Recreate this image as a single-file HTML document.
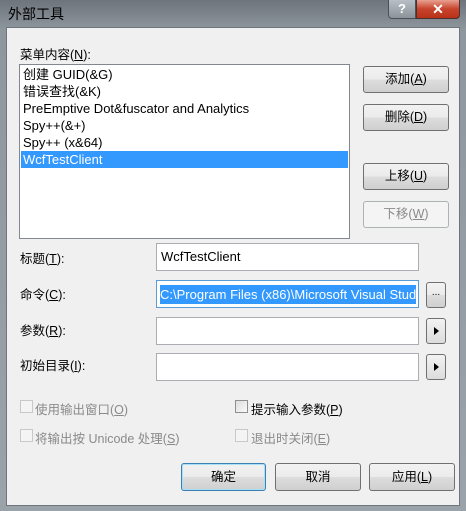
<!DOCTYPE html>
<html><head><meta charset="utf-8"><style>
*{box-sizing:border-box;margin:0;padding:0}
body{width:466px;height:511px;overflow:hidden;background:linear-gradient(#6d747c,#8e969e 30px,#9aa2aa);font-family:"Liberation Sans","Noto Sans CJK SC",sans-serif;font-size:12.5px;color:#000;position:relative}
.a{position:absolute}
.client{left:6px;top:27px;width:454px;height:479px;background:#f0f0f0;border:1px solid #6e757c}
.btn{position:absolute;border:1px solid #707070;border-radius:3px;background:linear-gradient(#f2f2f2 0,#ebebeb 50%,#dddddd 51%,#cfcfcf);text-align:center;font-size:12.5px;line-height:24px}
.dis{color:#8a8a8a;border-color:#adb2b5;background:#f4f4f4}
.tb{position:absolute;left:156px;width:263px;height:28px;background:#fff;border:1px solid #abadb3;padding-left:4px;line-height:26px;font-size:13px}
.sb{position:absolute;left:426px;width:20px;height:26px;border:1px solid #707070;border-radius:3px;background:linear-gradient(#f2f2f2,#dcdcdc)}
.lbl{position:absolute;left:20px}
.cb{position:absolute;width:13px;height:13px;border:1px solid #c8c8c8;background:#f4f4f4}
.g{color:#8a8a8a}
u{text-decoration:underline}
</style></head><body>
<div class="a" style="left:8px;top:4px;font-size:14px;color:#000">外部工具</div>
<div class="a" style="left:388px;top:0;width:28px;height:19px;border:1px solid #4a5058;border-top:none;border-radius:0 0 0 4px;background:linear-gradient(#b8bec5,#8b939b);color:#fff;font-weight:bold;text-align:center;font-size:13px;line-height:18px">?</div>
<div class="a" style="left:416px;top:0;width:44px;height:19px;border:1px solid #4a3030;border-top:none;border-radius:0 0 4px 0;background:linear-gradient(#e8a090,#c7432b 50%,#b83218);color:#fff;font-weight:bold;text-align:center;font-size:14px;line-height:18px">✕</div>
<div class="a client"></div>
<div class="lbl" style="top:44px">菜单内容(<u>N</u>):</div>
<div class="a" style="left:19px;top:64px;width:331px;height:175px;background:#fff;border:1px solid #828790;line-height:17px;font-size:13px">
<div style="padding:1px 0 0 3px">
<div>创建 GUID(&amp;G)</div><div>错误查找(&amp;K)</div><div>PreEmptive Dot&amp;fuscator and Analytics</div><div>Spy++(&amp;+)</div><div>Spy++ (x&amp;64)</div></div>
<div style="background:#3399ff;color:#fff;margin:0 1px;padding-left:2px">WcfTestClient</div>
</div>
<div class="btn" style="left:363px;top:66px;width:86px;height:27px">添加(<u>A</u>)</div>
<div class="btn" style="left:363px;top:104px;width:86px;height:27px">删除(<u>D</u>)</div>
<div class="btn" style="left:363px;top:163px;width:86px;height:27px">上移(<u>U</u>)</div>
<div class="btn dis" style="left:363px;top:201px;width:86px;height:27px">下移(<u>W</u>)</div>
<div class="lbl" style="top:248px">标题(<u>T</u>):</div>
<div class="tb" style="top:243px">WcfTestClient</div>
<div class="lbl" style="top:284px">命令(<u>C</u>):</div>
<div class="tb" style="top:280px;border-color:#5b9bd5;padding:4px 0 0 3px"><span style="background:#3399ff;color:#fff;display:inline-block;line-height:19px;white-space:nowrap;width:256px;overflow:hidden">C:\Program Files (x86)\Microsoft Visual Studio</span></div>
<div class="btn" style="left:426px;top:282px;width:20px;height:26px;line-height:20px;font-size:10px">...</div>
<div class="lbl" style="top:320px">参数(<u>R</u>):</div>
<div class="tb" style="top:317px"></div>
<div class="sb" style="top:318px"><div style="position:absolute;left:7px;top:8px;border-left:5px solid #000;border-top:4px solid transparent;border-bottom:4px solid transparent"></div></div>
<div class="lbl" style="top:355px">初始目录(<u>I</u>):</div>
<div class="tb" style="top:353px"></div>
<div class="sb" style="top:354px"><div style="position:absolute;left:7px;top:8px;border-left:5px solid #000;border-top:4px solid transparent;border-bottom:4px solid transparent"></div></div>
<div class="cb" style="left:20px;top:400px"></div><div class="a g" style="left:35px;top:399px">使用输出窗口(<u>O</u>)</div>
<div class="cb" style="left:235px;top:400px;border-color:#8e8f8f;background:linear-gradient(135deg,#ddd,#fafafa)"></div><div class="a" style="left:251px;top:399px">提示输入参数(<u>P</u>)</div>
<div class="cb" style="left:20px;top:429px"></div><div class="a g" style="left:35px;top:428px">将输出按 Unicode 处理(<u>S</u>)</div>
<div class="cb" style="left:235px;top:429px"></div><div class="a g" style="left:251px;top:428px">退出时关闭(<u>E</u>)</div>
<div class="btn" style="left:181px;top:463px;width:85px;height:28px;border-color:#3c7fb1;line-height:26px;box-shadow:inset 0 0 0 1px #a8e0f7">确定</div>
<div class="btn" style="left:275px;top:463px;width:86px;height:28px;line-height:26px">取消</div>
<div class="btn" style="left:369px;top:463px;width:86px;height:28px;line-height:26px">应用(<u>L</u>)</div>
</body></html>
